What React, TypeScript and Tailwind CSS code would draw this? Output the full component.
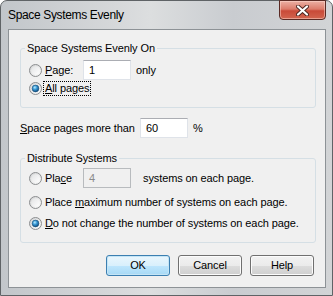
import React from "react";

const font = "font-['Liberation_Sans',Arial,sans-serif]";

const Radio = ({ checked = false }: { checked?: boolean }) => (
  <svg width="13" height="13" viewBox="0 0 13 13" className="shrink-0">
    <defs>
      <linearGradient id="rOuter" x1="0" y1="0" x2="1" y2="1">
        <stop offset="0" stopColor="#cfd0d1" />
        <stop offset="1" stopColor="#fdfdfd" />
      </linearGradient>
      <linearGradient id="rInner" x1="0" y1="0" x2="1" y2="1">
        <stop offset="0" stopColor="#e2e3e4" />
        <stop offset="1" stopColor="#ffffff" />
      </linearGradient>
      <radialGradient id="rDot" cx="40%" cy="35%" r="65%">
        <stop offset="0" stopColor="#b9ecff" />
        <stop offset="0.45" stopColor="#3a9ad6" />
        <stop offset="1" stopColor="#0f4d80" />
      </radialGradient>
    </defs>
    <circle cx="6.5" cy="6.5" r="6" fill="url(#rOuter)" stroke="#8c8e90" strokeWidth="1" />
    <circle cx="6.5" cy="6.5" r="4.3" fill="url(#rInner)" />
    {checked && <circle cx="6.5" cy="6.5" r="3.4" fill="url(#rDot)" stroke="#1a4f78" strokeWidth="0.6" />}
  </svg>
);

const Field = ({ value, disabled = false }: { value: string; disabled?: boolean }) => (
  <div
    className={
      disabled
        ? "w-[48px] h-[20px] shrink-0 border border-[#b8bbbe] bg-[#f0f0f0] text-[#8a8a8a] pl-[5px] leading-[18px]"
        : "w-[48px] h-[20px] shrink-0 border border-[#dfe3e9] border-t-[#abadb3] bg-white text-black pl-[5px] leading-[18px]"
    }
  >
    {value}
  </div>
);

const Button = ({ label, primary = false }: { label: string; primary?: boolean }) => (
  <div
    className={
      primary
        ? "w-[64px] h-[21px] rounded-[3px] border border-[#3c7fb1] bg-[linear-gradient(180deg,#eaf6fd_0%,#d9f0fc_50%,#bee6fd_51%,#a7d9f5_100%)] shadow-[inset_0_0_0_1px_#c4e5f6] flex items-center justify-center text-black"
        : "w-[64px] h-[21px] rounded-[3px] border border-[#707070] bg-[linear-gradient(180deg,#f2f2f2_0%,#ebebeb_50%,#dddddd_51%,#cfcfcf_100%)] shadow-[inset_0_0_0_1px_#fcfcfc] flex items-center justify-center text-black"
    }
  >
    {label}
  </div>
);

export default function App() {
  return (
    <div className={`${font} w-[333px] h-[296px] text-[11px] leading-[13px] tracking-[-0.1px] text-black`}>
      <div className="relative w-full h-full flex flex-col rounded-t-[7px] border border-[#5f6366] bg-[linear-gradient(90deg,#c2c6ca_0%,#d6d8da_35%,#dcdedf_45%,#c9ccd0_70%,#d2d4d6_100%)]">
        {/* title bar */}
        <div className="h-[28px] shrink-0 flex items-center pl-[7px] pt-[1px]">
          <span className="text-[12px] tracking-[-0.35px] text-black">Space Systems Evenly</span>
        </div>
        <div className="absolute top-[-1px] right-[6px] w-[47px] h-[20px] rounded-b-[4px] border border-[#5a2a24] bg-[linear-gradient(180deg,#ecb0a4_0%,#dc7c6b_45%,#c94a38_55%,#d2654f_100%)] shadow-[inset_0_0_0_1px_rgba(255,220,210,0.5)] flex items-center justify-center">
          <svg width="13" height="11" viewBox="0 0 13 11">
            <path d="M2 1.5 L11 9.5 M11 1.5 L2 9.5" stroke="#4a2520" strokeWidth="4" strokeLinecap="round" />
            <path d="M2 1.5 L11 9.5 M11 1.5 L2 9.5" stroke="#ffffff" strokeWidth="2.2" strokeLinecap="round" />
          </svg>
        </div>

        {/* client area */}
        <div className="flex-1 ml-[7px] mr-[6px] mb-[7px] border border-[#8d9296] bg-[#f0f0f0] pl-[11px] pr-[9px] flex flex-col">
          <fieldset className="mt-[12px] border border-[#d5dfe5] rounded-[3px] px-[8px] pb-[11px]">
            <legend className="ml-[-4px] px-[2px]">Space Systems Evenly On</legend>
            <div className="mt-[5px] h-[20px] flex items-center">
              <Radio />
              <span className="ml-[3px] w-[38px]">
                <u>P</u>age:
              </span>
              <Field value="1" />
              <span className="ml-[5px]">only</span>
            </div>
            <div className="h-[16px] flex items-center">
              <Radio checked />
              <span className="ml-[2px] px-[1px] leading-[13px] outline outline-1 outline-dotted outline-black">
                <u>A</u>ll pages
              </span>
            </div>
          </fieldset>

          <div className="mt-[10px] h-[20px] flex items-center">
            <span className="w-[120px]">
              <u>S</u>pace pages more than
            </span>
            <Field value="60" />
            <span className="ml-[5px]">%</span>
          </div>

          <fieldset className="mt-[14px] border border-[#d5dfe5] rounded-[3px] px-[8px] pb-[9px]">
            <legend className="ml-[-4px] px-[2px]">Distribute Systems</legend>
            <div className="mt-[3px] h-[20px] flex items-center">
              <Radio />
              <span className="ml-[3px] w-[38px]">
                Pla<u>c</u>e
              </span>
              <Field value="4" disabled />
              <span className="ml-[12px]">systems on each page.</span>
            </div>
            <div className="mt-[4px] h-[20px] flex items-center">
              <Radio />
              <span className="ml-[3px]">
                Place <u>m</u>aximum number of systems on each page.
              </span>
            </div>
            <div className="mt-[1px] h-[20px] flex items-center">
              <Radio checked />
              <span className="ml-[3px]">
                <u>D</u>o not change the number of systems on each page.
              </span>
            </div>
          </fieldset>

          <div className="mt-[12px] flex justify-end gap-[8px] pr-[2px]">
            <Button label="OK" primary />
            <Button label="Cancel" />
            <Button label="Help" />
          </div>
        </div>
      </div>
    </div>
  );
}
